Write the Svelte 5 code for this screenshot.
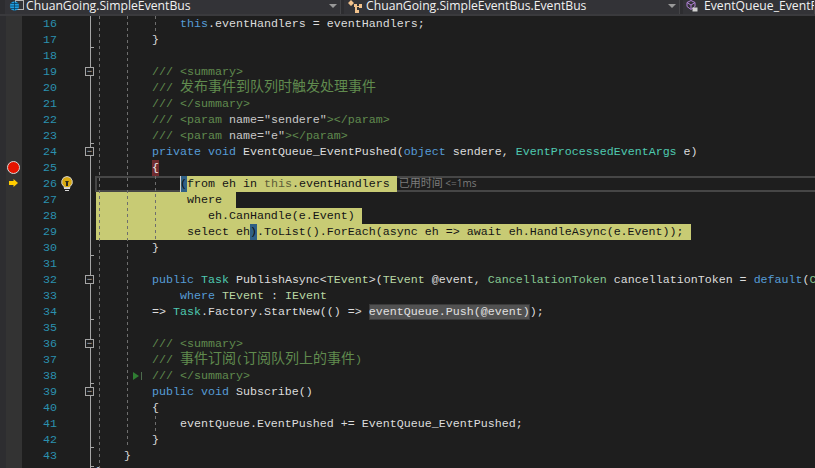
<script lang="ts">
	// [class, text] tokens for each visible source line
	const doc = (...rest) => [['c', '        /// '], ...rest]
	const lines = [
		{ n: 16, code: [['k', '            this'], ['', '.eventHandlers = eventHandlers;']] },
		{ n: 17, end: true, code: [['', '        }']] },
		{ n: 18, code: [] },
		{ n: 19, box: true, code: doc(['c', '<summary>']) },
		{ n: 20, code: doc(['c cjk', '发布事件到队列时触发处理事件']) },
		{ n: 21, code: doc(['c', '</summary>']) },
		{ n: 22, code: doc(['c', '<param '], ['a', 'name="sendere"'], ['c', '></param>']) },
		{ n: 23, end: true, code: doc(['c', '<param '], ['a', 'name="e"'], ['c', '></param>']) },
		{
			n: 24,
			box: true,
			code: [
				['k', '        private void'],
				['', ' EventQueue_EventPushed('],
				['k', 'object'],
				['', ' sendere, '],
				['t', 'EventProcessedEventArgs'],
				['', ' e)']
			]
		},
		{ n: 25, mark: 'stop', code: [['', '        '], ['red', '{']] },
		{
			n: 26,
			mark: 'arrow',
			current: true,
			code: [
				['', '            '],
				['brace caret', '('],
				['sel', 'from eh in '],
				['sel dim', 'this'],
				['sel', '.eventHandlers '],
				['took', '已用时间 '],
				['took small', '<=1ms']
			]
		},
		{ n: 27, code: [['sel', '             where  ']] },
		{ n: 28, code: [['sel', '                eh.CanHandle(e.Event) ']] },
		{
			n: 29,
			code: [
				['sel', '             select eh'],
				['brace', ')'],
				['sel', '.ToList().ForEach(async eh => await eh.HandleAsync(e.Event)); ']
			]
		},
		{ n: 30, end: true, code: [['', '        }']] },
		{ n: 31, code: [] },
		{
			n: 32,
			box: true,
			code: [
				['k', '        public'],
				['', ' '],
				['t', 'Task'],
				['', ' PublishAsync<'],
				['p', 'TEvent'],
				['', '>('],
				['p', 'TEvent'],
				['', ' @event, '],
				['s', 'CancellationToken'],
				['', ' cancellationToken = '],
				['k', 'default'],
				['', '('],
				['s', 'CancellationToken'],
				['', '))']
			]
		},
		{
			n: 33,
			code: [['k', '            where'], ['', ' '], ['p', 'TEvent'], ['', ' : '], ['p', 'IEvent']]
		},
		{
			n: 34,
			end: true,
			code: [
				['', '        => '],
				['t', 'Task'],
				['', '.Factory.StartNew(() => '],
				['ref', 'eventQueue.Push(@event)'],
				['', ');']
			]
		},
		{ n: 35, code: [] },
		{ n: 36, box: true, code: doc(['c', '<summary>']) },
		{
			n: 37,
			code: doc(['c cjk', '事件订阅'], ['c', '('], ['c cjk', '订阅队列上的事件'], ['c', ')'])
		},
		{ n: 38, end: true, run: true, code: doc(['c', '</summary>']) },
		{ n: 39, box: true, code: [['k', '        public void'], ['', ' Subscribe()']] },
		{ n: 40, code: [['', '        {']] },
		{ n: 41, code: [['', '            eventQueue.EventPushed += EventQueue_EventPushed;']] },
		{ n: 42, end: true, code: [['', '        }']] },
		{ n: 43, code: [['', '    }']] },
		{ n: 44, endTop: true, code: [['', '}']] }
	]

	// indent guides: x inside the editor, first and last pixel row
	const guides = [
		{ x: 3, top: 0, height: 452 },
		{ x: 31, top: 0, height: 431 },
		{ x: 59, top: 0, height: 16 },
		{ x: 59, top: 160, height: 64 },
		{ x: 59, top: 400, height: 16 }
	]
</script>

<div class="ide">
	<div class="nav">
		<div class="drop first">
			<svg width="15" height="12" viewBox="0 0 15 12">
				<rect x="6.5" y="0.5" width="8" height="9" fill="none" stroke="#b5b5b5" />
				<circle cx="5.5" cy="6" r="4.6" fill="#1f9ee0" />
				<path d="M1 6h9M5.5 1.5v9M2 3.5h7M2 8.5h7" stroke="#0c3f5e" stroke-width="0.8" />
			</svg>
			<span>ChuanGoing.SimpleEventBus</span>
			<i class="caret-down"></i>
		</div>
		<div class="drop second">
			<svg width="16" height="13" viewBox="0 0 16 13">
				<path d="M0 3l3-3 3 3-3 3zM6 4h3v2h2V4h3v4h-3V7H9v3h2v3H7V7H6z" fill="#f2c28c" />
			</svg>
			<span>ChuanGoing.SimpleEventBus.EventBus</span>
			<i class="caret-down"></i>
		</div>
		<div class="drop third">
			<svg width="16" height="12" viewBox="0 0 16 12">
				<path d="M1 2.5L5 .5l4 2v4l-4 3-4-3zM1 2.5l4 2.5 4-2.5M5 5v4" fill="none" stroke="#b180d7" />
				<rect x="6.5" y="7.5" width="5" height="4" fill="#d0d0d0" />
			</svg>
			<span>EventQueue_EventPushed(object sendere, EventProcessedEventArgs e)</span>
		</div>
	</div>

	<div class="editor">
		{#each lines as line}
			<div class="row">
				<div class="gutter">
					{#if line.mark === 'stop'}
						<i class="stop"></i>
					{:else if line.mark === 'arrow'}
						<svg class="arrow" width="9" height="8" viewBox="0 0 9 8">
							<path d="M0 2h4.5V0L9 4 4.5 8V6H0z" fill="#ffcc00" />
						</svg>
					{/if}
				</div>
				<div class="num">{line.n}</div>
				<div class="margin" class:box={line.box} class:end={line.end} class:end-top={line.endTop}>
					{#if line.current}
						<svg class="bulb" width="12" height="15" viewBox="0 0 12 15">
							<path d="M6 .5a5.5 5.5 0 0 0-3 10v1h6v-1a5.5 5.5 0 0 0-3-10z" fill="#d9a90f" stroke="#cfcfcf" />
							<path d="M4 5h4L7 6.5V10H5V6.5z" fill="#2a2a20" />
							<rect x="3" y="12" width="6" height="1" fill="#d8d8d8" />
							<rect x="4" y="14" width="4" height="1" fill="#d8d8d8" />
						</svg>
					{/if}
					{#if line.run}
						<svg class="run" width="9" height="8" viewBox="0 0 9 8">
							<path d="M0 0l6 4-6 4z" fill="#2f7d32" />
							<rect x="8" y="0" width="1" height="8" fill="#4d6b4d" />
						</svg>
					{/if}
				</div>
				<div class="code" class:current={line.current}>{#each line.code as tok}<span class={tok[0]}>{tok[1]}</span>{/each}</div>
			</div>
		{/each}
		{#each guides as g}
			<i class="guide" style="left: {g.x + 96}px; top: {g.top}px; height: {g.height}px"></i>
		{/each}
	</div>
</div>

<style>
	:global(body) {
		background: #1e1e1e;
	}

	.ide {
		width: 815px;
		height: 468px;
		overflow: hidden;
		background: #1e1e1e;
	}

	.nav {
		display: flex;
		gap: 3px;
		height: 16px;
		padding-left: 5px;
		box-sizing: border-box;
		background: #2d2d30;
		border-bottom: 2px solid #3a3a3d;
		overflow: hidden;
	}

	.drop {
		display: flex;
		gap: 2px;
		position: relative;
		padding-left: 4px;
		height: 14px;
		box-sizing: border-box;
		background: #333337;
		border-right: 1px solid #434346;
		color: #f1f1f1;
		font: 12.2px/11px 'Open Sans', sans-serif;
		white-space: nowrap;
		overflow: hidden;
	}

	.drop svg {
		flex: none;
	}

	.first {
		width: 336px;
	}

	.second {
		width: 336px;
	}

	.third {
		flex: 1;
		padding-left: 3px;
	}

	.caret-down {
		position: absolute;
		right: 3px;
		top: 4px;
		border: 4px solid transparent;
		border-top-color: #999;
		border-bottom: 0;
	}

	.editor {
		position: relative;
	}

	.row {
		display: flex;
		height: 16px;
		font: 11.667px/16px 'Liberation Mono', 'Noto Sans CJK SC', monospace;
		color: #dcdcdc;
	}

	.gutter {
		position: relative;
		width: 22px;
		box-sizing: border-box;
		background: #333333;
		border-left: 6px solid #2d2d30;
	}

	.stop {
		position: absolute;
		left: 1px;
		top: 1px;
		width: 11px;
		height: 11px;
		border-radius: 50%;
		background: #e51400;
		border: 1px solid #d8d8d8;
	}

	.arrow {
		position: absolute;
		left: 3px;
		top: 3px;
	}

	.num {
		width: 35px;
		text-align: right;
		color: #2b91af;
	}

	.margin {
		position: relative;
		width: 39px;
	}

	.margin::before {
		content: '';
		position: absolute;
		left: 33px;
		top: 0;
		bottom: 0;
		width: 1px;
		background: #a5a5a5;
	}

	.box::after {
		content: '−';
		position: absolute;
		left: 28px;
		top: 3px;
		width: 9px;
		height: 9px;
		box-sizing: border-box;
		border: 1px solid #a5a5a5;
		background: #1e1e1e;
		color: #c8c8c8;
		font: 9px/7px 'Liberation Sans', sans-serif;
		text-align: center;
	}

	.end::after,
	.end-top::after {
		content: '';
		position: absolute;
		left: 33px;
		bottom: 0;
		width: 4px;
		height: 1px;
		background: #a5a5a5;
	}

	.end-top::after {
		bottom: auto;
		top: 2px;
	}

	.bulb {
		position: absolute;
		left: 4px;
		top: 0;
		z-index: 2;
	}

	.code {
		position: relative;
		flex: 1;
		white-space: pre;
		min-width: 0;
	}

	.current::before {
		content: '';
		position: absolute;
		left: -1px;
		top: 0;
		right: 0;
		height: 16px;
		box-sizing: border-box;
		border: 2px solid #464646;
		border-right: 0;
	}

	.run {
		position: absolute;
		left: 76px;
		top: 4px;
	}

	.guide {
		position: absolute;
		width: 1px;
		background: repeating-linear-gradient(#6e6e6e 0 3px, transparent 3px 6px);
	}

	.k {
		color: #569cd6;
	}

	.t {
		color: #4ec9b0;
	}

	.s {
		color: #86c691;
	}

	.p {
		color: #b8d7a3;
	}

	.c {
		color: #608b4e;
	}

	.a {
		color: #c8c8c8;
	}

	.cjk {
		font-family: 'Noto Sans CJK SC', sans-serif;
		font-size: 14px;
		line-height: 0;
	}

	.red,
	.sel,
	.brace,
	.ref {
		position: relative;
		display: inline-block;
		height: 16px;
	}

	.red {
		background: #702c2f;
		color: #f0f0f0;
	}

	.sel {
		background: #c8cb74;
		color: #141414;
	}

	.dim {
		color: #5d5d38;
	}

	.brace {
		background: #2f5f85;
		color: #101010;
	}

	.caret {
		box-shadow: inset 1px 0 #d0d0d0;
	}

	.ref {
		background: #515151;
		box-shadow: inset 0 0 0 1px #3a3a3a;
		color: #e0e0e0;
	}

	.took {
		position: relative;
		margin-left: 2px;
		font-family: 'Noto Sans CJK SC', sans-serif;
		font-size: 11px;
		line-height: 0;
		color: #7c7c7c;
	}

	.small {
		margin-left: 0;
		font-family: 'Open Sans', sans-serif;
		font-size: 10px;
	}
</style>
